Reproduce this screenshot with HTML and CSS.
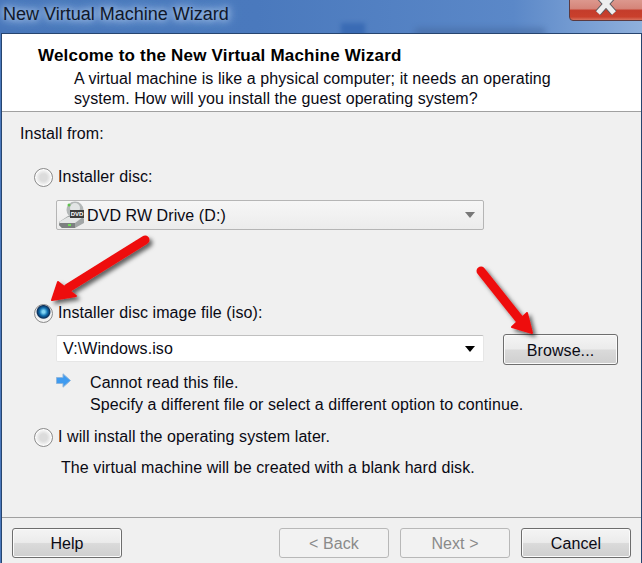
FILE: index.html
```html
<!DOCTYPE html>
<html lang="en">
<head>
    <meta charset="UTF-8">
    <meta name="viewport" content="width=device-width, initial-scale=1.0">
    <title>New Virtual Machine Wizard</title>
    <link rel="stylesheet" href="styles.css">
</head>
<body>
    <div class="window">
        <div class="titlebar">
            <span class="title">New Virtual Machine Wizard</span>
            <span class="blur-block"></span>
            <span class="blur-text"></span>
            <div class="close">
                <svg width="30" height="20" viewBox="0 0 30 20">
                    <path d="M7 -4 L23 14 M23 -4 L7 14" stroke="#5a5a60" stroke-width="7" fill="none"/>
                    <path d="M7 -4 L23 14 M23 -4 L7 14" stroke="#eeeeee" stroke-width="5" fill="none"/>
                </svg>
            </div>
        </div>
        <div class="wizard">
            <div class="header">
                <h1>Welcome to the New Virtual Machine Wizard</h1>
                <p>A virtual machine is like a physical computer; it needs an operating<br>system. How will you install the guest operating system?</p>
            </div>
            <div class="content">
                <div class="install-from">Install from:</div>

                <label class="radio-row first-radio">
                    <span class="radio"></span>
                    <span>Installer disc:</span>
                </label>
                <div class="field-row">
                    <div class="combo combo-disabled">
                        <svg class="dvd-icon" width="28" height="28" viewBox="0 0 28 28">
                            <circle cx="17" cy="9" r="8.5" fill="#b4b8b8"/>
                            <circle cx="17" cy="7" r="5" fill="#e2e5e5"/>
                            <circle cx="11" cy="4" r="1.5" fill="#5fc04f"/>
                            <path d="M1 21 L10 15 H24 L26 18 V22 L17 27 H4 L1 24 Z" fill="#a2a6a6"/>
                            <path d="M1 21 L10 16 H25 L17 22 H2 Z" fill="#e4e6e6"/>
                            <path d="M2 22 H17 V27 H4 L1 24 Z" fill="#7c8080"/>
                            <rect x="10" y="23" width="3" height="2" fill="#6fdc55"/>
                            <rect x="12" y="9" width="14" height="8" fill="#3b3b3b"/>
                        </svg>
                        <span class="dvd-tag">DVD</span>
                        <span class="combo-text">DVD RW Drive (D:)</span>
                        <span class="caret caret-grey"></span>
                    </div>
                </div>

                <label class="radio-row second-radio">
                    <span class="radio radio-on"></span>
                    <span>Installer disc image file (iso):</span>
                </label>
                <div class="field-row iso-row">
                    <div class="combo combo-input">
                        <span class="combo-text">V:\Windows.iso</span>
                        <span class="caret"></span>
                    </div>
                    <button class="btn browse">Browse...</button>
                </div>
                <div class="message">
                    <svg class="info-arrow" width="15" height="15" viewBox="0 0 15 15">
                        <path d="M0.5 4.5 H7 V0.8 L14.5 7.5 L7 14.2 V10.5 H0.5 Z" fill="#3f9bf0" stroke="#8fb6dc"/>
                    </svg>
                    <p>Cannot read this file.<br>Specify a different file or select a different option to continue.</p>
                </div>

                <label class="radio-row third-radio">
                    <span class="radio"></span>
                    <span>I will install the operating system later.</span>
                </label>
                <p class="later-note">The virtual machine will be created with a blank hard disk.</p>
            </div>
            <div class="footer">
                <button class="btn">Help</button>
                <div class="footer-right">
                    <button class="btn" disabled>&lt; Back</button>
                    <button class="btn" disabled>Next &gt;</button>
                    <button class="btn">Cancel</button>
                </div>
            </div>
        </div>

        <!-- red arrows painted over the screenshot -->
        <svg class="arrows" width="642" height="563" viewBox="0 0 642 563">
            <defs>
                <filter id="arrow-shadow" x="-30%" y="-30%" width="160%" height="160%">
                    <feDropShadow dx="3" dy="3" stdDeviation="2" flood-color="#000" flood-opacity="0.6"/>
                </filter>
            </defs>
            <g filter="url(#arrow-shadow)" fill="#ee1111" stroke="#ee1111" stroke-linejoin="round">
                <path d="M145 240 L68 288" stroke-width="9" stroke-linecap="round" fill="none"/>
                <path d="M52 300 L58 282 L76 296 Z" stroke-width="2"/>
                <path d="M481 271 L520 320" stroke-width="9" stroke-linecap="round" fill="none"/>
                <path d="M532 333 L527 313 L512 327 Z" stroke-width="2"/>
            </g>
        </svg>
    </div>
</body>
</html>
```

FILE: styles.css
```css
* {
    box-sizing: border-box;
}
body {
    margin: 0;
    font-family: "Liberation Sans", Arial, sans-serif;
    font-size: 16px;
    letter-spacing: 0.08px;
    color: #0a0a14;
}
.window {
    position: relative;
    width: 642px;
    height: 563px;
    overflow: hidden;
    background: #4a78bc;
}
.titlebar {
    position: relative;
    height: 33px;
    padding: 1px 0 0 3px;
    overflow: hidden;
    background: linear-gradient(90deg, #4876ba 0%, #4a79bd 40%, #5b88c8 80%, #8fb0dc 100%);
}
.title {
    font-size: 18px;
    line-height: 26px;
    letter-spacing: 0;
    color: #10182a;
    text-shadow: 0 0 6px #a9c6ea, 0 0 10px #a9c6ea, 0 0 14px #a9c6ea;
}
.blur-block {
    position: absolute;
    left: 341px;
    top: 23px;
    width: 24px;
    height: 14px;
    background: #3a6bb4;
    filter: blur(2px);
}
.blur-text {
    position: absolute;
    left: 415px;
    top: 28px;
    width: 130px;
    height: 8px;
    background: #44689f;
    opacity: 0.6;
    filter: blur(3px);
}
.close {
    position: absolute;
    left: 569px;
    right: -4px;
    top: -2px;
    height: 23px;
    padding-right: 4px;
    display: flex;
    justify-content: center;
    border: 1px solid #5a3a40;
    border-radius: 0 0 4px 4px;
    background: linear-gradient(180deg, #dd9a90 0%, #d5857a 45%, #c43c2b 55%, #c9402c 85%, #d8705c 100%);
}
.wizard {
    height: 530px;
    margin-left: 1px;
    display: flex;
    flex-direction: column;
    background: #f0f0f0;
    border-left: 1px solid #27456f;
    border-top: 1px solid #27456f;
    border-right: 1px solid #27456f;
}
.header {
    height: 78px;
    padding: 12px 0 0 36px;
    background: #fff;
    border-bottom: 1px solid #a0a0a0;
}
.header h1 {
    margin: 0;
    font-size: 17px;
    line-height: 20px;
    letter-spacing: 0.2px;
    font-weight: bold;
    color: #000;
}
.header p {
    margin: 3px 0 0 36px;
    line-height: 20px;
}
.content {
    flex: 1;
    padding-left: 16px;
}
.install-from {
    margin: 12px 0 0 2px;
    line-height: 20px;
}
.radio-row {
    display: flex;
    align-items: center;
    height: 22px;
    gap: 5px;
    margin-left: 16px;
}
.first-radio {
    margin-top: 22px;
}
.second-radio {
    margin-top: 72px;
}
.third-radio {
    margin-top: 10px;
}
.radio {
    width: 19px;
    height: 19px;
    border-radius: 50%;
    border: 1px solid #8a8a8a;
    background: radial-gradient(circle at 50% 50%, #dcdcdc 0 30%, #f2f2f2 58%, #ffffff 68%, #b8b8b8 100%);
}
.radio-on {
    background: radial-gradient(circle at 50% 40%, #7fd4f4 0 10%, #0f6fb0 30%, #0b2f5a 48%, #eeeeee 56%, #f5f5f5 72%, #bdbdbd 100%);
}
.field-row {
    display: flex;
    align-items: flex-start;
    gap: 19px;
    margin-left: 38px;
    margin-top: 12px;
}
.iso-row {
    margin-top: 11px;
}
.combo {
    position: relative;
    width: 428px;
    height: 30px;
    display: flex;
    align-items: center;
    border-radius: 2px;
    border: 1px solid #b5b5b5;
}
.combo-disabled {
    background: linear-gradient(180deg, #f6f6f6, #ececec);
}
.combo-input {
    height: 27px;
    background: #fff;
    border-color: #e6e6e6;
    border-top-color: #c0c0c0;
}
.dvd-icon {
    margin-left: 1px;
    flex: none;
}
.dvd-tag {
    position: absolute;
    left: 13px;
    top: 9px;
    width: 14px;
    font-size: 6px;
    font-weight: bold;
    letter-spacing: 0;
    line-height: 8px;
    text-align: center;
    color: #fff;
}
.combo-disabled .combo-text {
    margin-left: 1px;
    padding-top: 2px;
}
.combo-input .combo-text {
    margin-left: 6px;
}
.caret {
    position: absolute;
    right: 8px;
    top: 50%;
    margin-top: -3px;
    border-style: solid;
    border-width: 6px 5px 0;
    border-color: #000 transparent transparent;
}
.caret-grey {
    border-top-color: #787878;
}
.btn {
    width: 110px;
    height: 30px;
    padding: 2px 0 0;
    font: inherit;
    letter-spacing: inherit;
    color: inherit;
    border: 1px solid #6e6e6e;
    border-radius: 3px;
    background: linear-gradient(180deg, #f4f4f4 0%, #ebebeb 48%, #dadada 52%, #cfcfcf 100%);
    box-shadow: inset 0 0 0 1px #fbfbfb;
}
.btn:disabled {
    color: #8a8a8a;
    border-color: #b8b8b8;
    background: #f2f2f2;
    box-shadow: none;
}
.browse {
    width: 115px;
    height: 31px;
    margin-top: -1px;
}
.message {
    display: flex;
    margin: 7px 0 0 38px;
}
.info-arrow {
    flex: none;
    margin-top: 1px;
}
.message p {
    margin: 0 0 0 19px;
    line-height: 22px;
}
.later-note {
    margin: 10px 0 0 43px;
    line-height: 20px;
}
.footer {
    display: flex;
    justify-content: space-between;
    height: 46px;
    padding: 10px 10px 0 10px;
    border-top: 1px solid #a0a0a0;
}
.footer-right {
    display: flex;
    gap: 11px;
}
.arrows {
    position: absolute;
    left: 0;
    top: 0;
    pointer-events: none;
}
```
